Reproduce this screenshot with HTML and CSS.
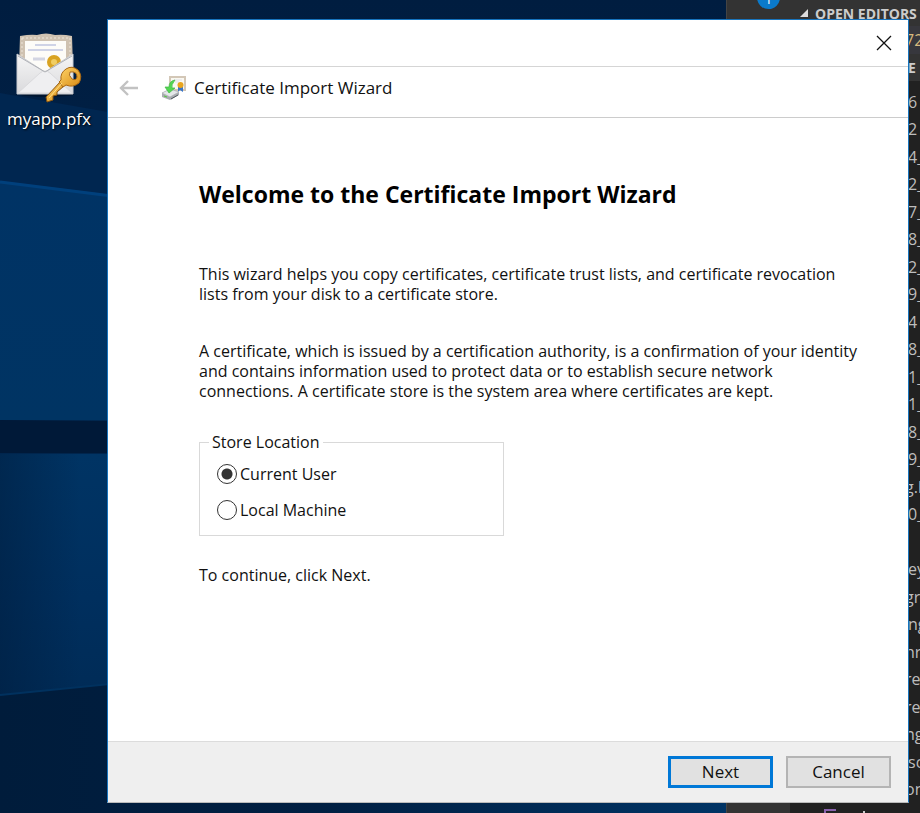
FILE: index.html
```html
<!DOCTYPE html>
<html lang="en">
<head>
<meta charset="utf-8">
<meta name="viewport" content="width=device-width, initial-scale=1">
<title>Certificate Import Wizard</title>
<link rel="stylesheet" href="styles.css">
</head>
<body>
<div class="desktop">
  <svg class="wallpaper" viewBox="0 0 920 813" preserveAspectRatio="none" aria-hidden="true">
    <defs>
      <linearGradient id="sky" x1="0" y1="0" x2="0" y2="1">
        <stop offset="0" stop-color="#001d40"/><stop offset="1" stop-color="#002b57"/>
      </linearGradient>
      <linearGradient id="pane" x1="0" y1="0" x2="0" y2="1">
        <stop offset="0" stop-color="#003365"/><stop offset="1" stop-color="#003463"/>
      </linearGradient>
      <linearGradient id="low" x1="0" y1="0" x2="0" y2="1">
        <stop offset="0" stop-color="#003464"/><stop offset=".4" stop-color="#002f5e"/><stop offset="1" stop-color="#00274e"/>
      </linearGradient>
      <linearGradient id="floor" x1="0" y1="0" x2="1" y2="0">
        <stop offset="0" stop-color="#001c3b"/><stop offset=".35" stop-color="#001f42"/><stop offset=".8" stop-color="#003465"/>
      </linearGradient>
      <linearGradient id="edge" x1="0" y1="0" x2="1" y2="0">
        <stop offset="0" stop-color="#001c3c" stop-opacity=".5"/><stop offset="1" stop-color="#001c3c" stop-opacity="0"/>
      </linearGradient>
    </defs>
    <rect width="920" height="813" fill="url(#sky)"/>
    <path d="M0 93L108 112V195L0 181Z" fill="#002650"/>
    <path d="M0 181L920 295V421H0Z" fill="url(#pane)"/>
    <path d="M0 182L120 197" stroke="#00407c" stroke-width="3"/>
    <path d="M0 420L920 425V453H0Z" fill="#001938"/>
    <path d="M0 454H920V813H0Z" fill="url(#low)"/>
    <rect y="454" width="80" height="240" fill="url(#edge)"/>
    <path d="M0 695L110 684L920 640V813H0Z" fill="url(#floor)"/>
    <path d="M0 695L110 684" stroke="#00315e" stroke-width="2"/>
  </svg>

  <div class="shortcut">
    <svg width="68" height="70" viewBox="0 0 68 70" aria-hidden="true">
      <defs>
        <linearGradient id="env" x1="0" y1="0" x2="0" y2="1">
          <stop offset="0" stop-color="#f6f6f6"/><stop offset="1" stop-color="#d9d9dc"/>
        </linearGradient>
        <linearGradient id="gold" x1="0" y1="0" x2="1" y2="1">
          <stop offset="0" stop-color="#ffd56b"/><stop offset="1" stop-color="#d88a12"/>
        </linearGradient>
      </defs>
      <ellipse cx="32" cy="61" rx="27" ry="3" fill="#000b1c" opacity=".5"/>
      <path d="M5 3Q16 1 22 2Q31-1 40 2Q48 1 57 3L58 35H4Z" fill="#cfc2b1"/>
      <path d="M7 5H55V34H7Z" fill="none" stroke="#eee6da" stroke-dasharray="2 2"/>
      <path d="M10 8H51V40H10Z" fill="#fdfcf8"/>
      <path d="M20 12H41M13 17H48" stroke="#cfd3e6" stroke-width="2"/>
      <path d="M18 26H30" stroke="#d3d5e2" stroke-width="3"/>
      <circle cx="39" cy="29" r="7" fill="#d9a321"/><circle cx="39" cy="29" r="3" fill="#f0cd62"/>
      <path d="M2 21L30 39L58 21V61H2Z" fill="url(#env)" stroke="#c9cbd0"/>
      <path d="M3 60L25 40Q30 36 35 40L57 60Z" fill="#efeff1" stroke="#dadadd"/>
      <path d="M3 23L30 39L57 23" fill="none" stroke="#b0b2b7"/>
      <path d="M46 48L49 53L42 59L42 62L38 63L38 67L32 69L31 64Z" fill="url(#gold)" stroke="#8b5610"/>
      <path d="M51 36Q57 32 63 37Q68 43 64 50Q58 55 51 52L48 54L44 49L46 47Q45 40 51 36ZM55 39Q53 42 57 46Q61 48 62 44Q62 38 55 39Z" fill="url(#gold)" fill-rule="evenodd" stroke="#a96813"/>
      <path d="M47 50L34 65" stroke="#ffe08a"/>
    </svg>
    <span>myapp.pfx</span>
  </div>

  <div class="editor">
    <div class="activity"><span class="badge">1</span></div>
    <div class="sidebar">
      <div class="heading"><svg width="8" height="8" viewBox="0 0 8 8" aria-hidden="true"><path d="M8 0V8H0Z" fill="#ddd"/></svg>OPEN EDITORS</div>
      <div class="open-file cut">72</div>
      <div class="section">E</div>
      <ul class="files">
        <li>6</li><li>2</li><li>4_</li><li>2_</li><li>7_</li><li>8_</li><li>2_</li><li>9_</li><li>4</li><li>8_</li><li>1_</li><li>1_</li><li>8_</li><li>9_</li><li class="cut">g.l</li><li>0_</li><li></li><li>ey</li><li class="cut">gr</li><li>ng</li><li class="cut">hr</li><li class="cut">re</li><li class="cut">re</li><li class="cut">ng</li><li>sc</li><li class="cut">on</li>
      </ul>
      <div class="logo"><svg width="50" height="12" viewBox="0 0 50 12" aria-hidden="true"><path d="M1 12V1H12M4 12V5H12" fill="none" stroke="#8a63ad" stroke-width="2"/><path d="M40 2V12" stroke="#ccc" stroke-width="2"/></svg></div>
    </div>
  </div>

  <main class="dialog">
    <div class="titlebar">
      <button class="close" aria-label="Close"><svg width="16" height="16" viewBox="0 0 16 16" aria-hidden="true"><path d="M1 1L15 15M15 1L1 15" stroke="#111" stroke-width="1.3"/></svg></button>
    </div>
    <header class="header">
      <button class="back" aria-label="Back" disabled><svg width="20" height="18" viewBox="0 0 20 18" aria-hidden="true"><path d="M19 9H2M9 2L2 9L9 16" fill="none" stroke="#c2c2c2" stroke-width="2.4"/></svg></button>
      <svg width="26" height="26" viewBox="0 0 26 26" aria-hidden="true">
        <path d="M8 2H23V15H8Z" fill="#faf8f1" stroke="#d3c7b7" stroke-width="2"/>
        <path d="M12 5H20M13 7H17" stroke="#dfe1ea"/>
        <path d="M16 12L16 17L18 15L21 17V11Z" fill="#3975c8"/>
        <circle cx="18.500" cy="10" r="3" fill="#e9a51d"/>
        <path d="M0 18L8 14L17 17V20L8 25L0 22Z" fill="#a9adb1"/>
        <path d="M0 18L8 14L17 17L8 22Z" fill="#e4e7e9" stroke="#a6aaae" stroke-width=".6"/>
        <path d="M9 24L16 20" stroke="#50585e"/><path d="M2 21L5 22" stroke="#54cc3d"/>
        <path d="M13 5Q7 6 7 12H3L7 18L13 13H10Q9 10 13 5Z" fill="#53d653" stroke="#3fb944" stroke-width=".7"/>
      </svg>
      <span>Certificate Import Wizard</span>
    </header>
    <form class="wizard">
      <section class="content">
        <h1>Welcome to the Certificate Import Wizard</h1>
        <p class="intro">This wizard helps you copy certificates, certificate trust lists, and certificate revocation<br>lists from your disk to a certificate store.</p>
        <p class="about">A certificate, which is issued by a certification authority, is a confirmation of your identity<br>and contains information used to protect data or to establish secure network<br>connections. A certificate store is the system area where certificates are kept.</p>
        <fieldset>
          <legend>Store Location</legend>
          <label><input type="radio" name="store" checked>Current User</label>
          <label><input type="radio" name="store">Local Machine</label>
        </fieldset>
        <p>To continue, click Next.</p>
      </section>
      <footer>
        <button type="button" class="action primary">Next</button>
        <button type="button" class="action">Cancel</button>
      </footer>
    </form>
  </main>
</div>
</body>
</html>
```
FILE: styles.css
```css
* { box-sizing: border-box; }
body { margin: 0; font-family: "Open Sans", "Noto Sans", sans-serif; }
.desktop { position: relative; min-height: 100vh; overflow: hidden; background: #002b57; }
.wallpaper { position: absolute; inset: 0; width: 100%; height: 100%; }

.shortcut {
  position: absolute; left: 0; top: 33px; width: 98px;
  display: flex; flex-direction: column; align-items: center; gap: 4px;
  color: #fff; font-size: 17px; line-height: 24px; text-shadow: 1px 1px 2px #000;
}

.editor {
  position: absolute; top: 0; right: 0; bottom: 0; width: 194px;
  display: flex; overflow: hidden; background: #212121; color: #bdbdbd; font-size: 16px;
}
.activity { width: 64px; background: #333; border-left: 1px solid #444; }
.badge {
  display: flex; align-items: flex-end; justify-content: center;
  width: 23px; height: 23px; margin: -14px 0 0 30px; padding-bottom: 2px;
  border-radius: 50%; background: #0a7acb; color: #fff; font-size: 13px; line-height: 16px;
}
.sidebar { flex: 1; min-width: 0; background: #212121; }
.heading {
  display: flex; align-items: center; gap: 7px; height: 26px; padding-left: 10px;
  background: #333; color: #ccc; font-size: 14px; font-weight: 700; white-space: nowrap;
}
.open-file, .section, .files li { padding-left: 118px; white-space: nowrap; }
.open-file { height: 28px; line-height: 28px; background: #37373d; color: #d7ba7d; }
.section { height: 27px; line-height: 27px; background: #333; color: #ccc; font-size: 14px; font-weight: 700; }
.files { margin: 0; padding: 8px 0 0; list-style: none; }
.files li { height: 27px; line-height: 27px; }
.files li:nth-child(even) { height: 28px; }
.open-file.cut, .files .cut { padding-left: 115px; }
.logo { display: flex; padding: 5px 0 0 34px; }

.dialog {
  position: absolute; inset: 19px 11px 10px 107px;
  display: flex; flex-direction: column;
  background: #fff; border: 1px solid #1874bd; border-bottom-color: #bbb; color: #111;
}
.titlebar { display: flex; justify-content: flex-end; height: 47px; border-bottom: 1px solid #d5d5d5; }
.close, .back { display: flex; align-items: center; justify-content: center; padding: 0; border: 0; background: none; }
.close { width: 49px; }
.header {
  display: flex; align-items: center; height: 51px; padding: 0 11px 9px; gap: 23px;
  border-bottom: 1px solid #ccc; font-size: 17px;
}
.header span { margin-left: -17px; }
.wizard { flex: 1; display: flex; flex-direction: column; }
.content { flex: 1; padding: 60px 60px 0 91px; font-size: 16px; line-height: 20px; }
h1 { margin: 0; color: #000; font-size: 23px; line-height: 32px; font-weight: 700; white-space: nowrap; }
p { margin: 0; white-space: nowrap; }
.intro { margin-top: 54px; }
.about { margin-top: 37px; }
fieldset {
  display: flex; flex-direction: column; gap: 12px; width: 305px;
  margin: 31px 0 29px; padding: 10px 17px 13px; border: 1px solid #d9d9d9;
}
legend { margin-left: -8px; padding: 0 3px; }
label { display: flex; align-items: center; gap: 3px; height: 24px; }
input { appearance: none; width: 20px; height: 20px; margin: 0; border: 1px solid #333; border-radius: 50%; background: #fff; }
input:checked { background: radial-gradient(circle, #333 5px, #fff 6px); }
footer {
  display: flex; justify-content: flex-end; gap: 13px; padding: 14px 17px;
  border-top: 1px solid #dcdcdc; background: #efefef;
}
.action {
  width: 105px; height: 32px; padding: 0; border: 2px solid #b4b4b4;
  background: #e1e1e1; color: #111; font: 17px/24px "Open Sans", "Noto Sans", sans-serif;
}
.primary { border: 3px solid #0078d7; }
```
